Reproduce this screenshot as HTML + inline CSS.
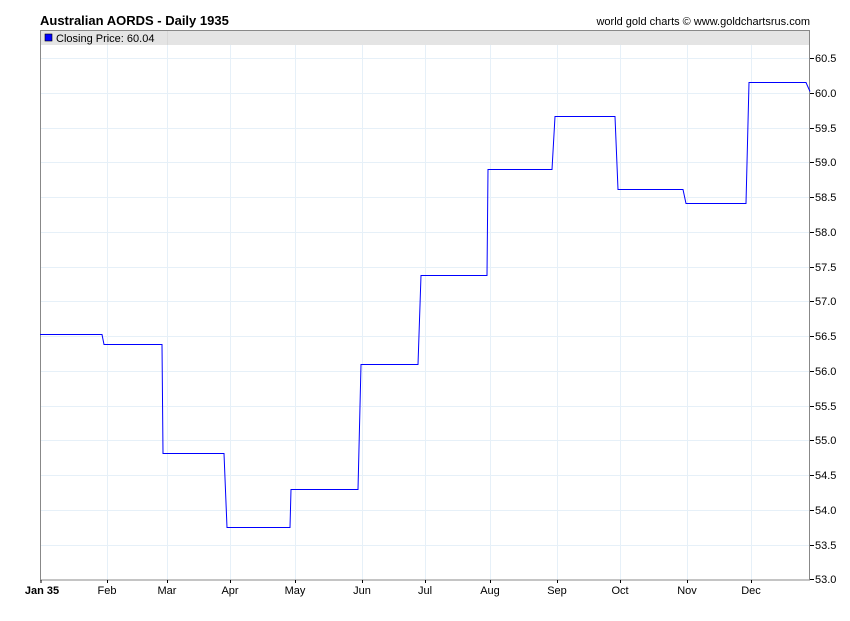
<!DOCTYPE html>
<html><head><style>
body{margin:0;background:#fff;width:850px;height:616px;overflow:hidden;font-family:"Liberation Sans",sans-serif}
</style></head><body>
<svg width="850" height="616" xmlns="http://www.w3.org/2000/svg" font-family="Liberation Sans, sans-serif">
<text x="40" y="25" font-size="13" font-weight="bold" fill="#000">Australian AORDS - Daily 1935</text>
<text x="810" y="25" font-size="11" text-anchor="end" fill="#000">world gold charts © www.goldchartsrus.com</text>
<rect x="40" y="30" width="770" height="15" fill="#e4e4e4"/>
<g stroke="#e6f0f8" stroke-width="1">
<line x1="40" y1="58.5" x2="810" y2="58.5"/><line x1="40" y1="93.5" x2="810" y2="93.5"/><line x1="40" y1="128.5" x2="810" y2="128.5"/><line x1="40" y1="162.5" x2="810" y2="162.5"/><line x1="40" y1="197.5" x2="810" y2="197.5"/><line x1="40" y1="232.5" x2="810" y2="232.5"/><line x1="40" y1="267.5" x2="810" y2="267.5"/><line x1="40" y1="301.5" x2="810" y2="301.5"/><line x1="40" y1="336.5" x2="810" y2="336.5"/><line x1="40" y1="371.5" x2="810" y2="371.5"/><line x1="40" y1="406.5" x2="810" y2="406.5"/><line x1="40" y1="440.5" x2="810" y2="440.5"/><line x1="40" y1="475.5" x2="810" y2="475.5"/><line x1="40" y1="510.5" x2="810" y2="510.5"/><line x1="40" y1="545.5" x2="810" y2="545.5"/>
<line x1="107.5" y1="45" x2="107.5" y2="580"/><line x1="167.5" y1="45" x2="167.5" y2="580"/><line x1="230.5" y1="45" x2="230.5" y2="580"/><line x1="295.5" y1="45" x2="295.5" y2="580"/><line x1="362.5" y1="45" x2="362.5" y2="580"/><line x1="425.5" y1="45" x2="425.5" y2="580"/><line x1="490.5" y1="45" x2="490.5" y2="580"/><line x1="557.5" y1="45" x2="557.5" y2="580"/><line x1="620.5" y1="45" x2="620.5" y2="580"/><line x1="687.5" y1="45" x2="687.5" y2="580"/><line x1="751.5" y1="45" x2="751.5" y2="580"/>
</g>
<line x1="107.5" y1="30" x2="107.5" y2="45" stroke="#d8d8d8"/><line x1="167.5" y1="30" x2="167.5" y2="45" stroke="#d8d8d8"/>
<rect x="40.5" y="30.5" width="769" height="549.5" fill="none" stroke="#888"/>
<rect x="45" y="34" width="7" height="7" fill="#0000ff" stroke="#000" stroke-width="0.6"/>
<text x="56" y="42" font-size="11" fill="#000">Closing Price: 60.04</text>
<polyline fill="none" stroke="#0000ff" stroke-width="1" points="40,334.5 102,334.5 104,344.5 162,344.5 163,453.5 224,453.5 227,527.5 290,527.5 291,489.5 358,489.5 361,364.5 418,364.5 421,275.5 487,275.5 488,169.5 552,169.5 555,116.5 615,116.5 618,189.5 683,189.5 686,203.5 746,203.5 749,82.5 806,82.5 810,91.5"/>
<g stroke="#000"><line x1="810" y1="58.5" x2="814" y2="58.5"/><line x1="810" y1="93.5" x2="814" y2="93.5"/><line x1="810" y1="128.5" x2="814" y2="128.5"/><line x1="810" y1="162.5" x2="814" y2="162.5"/><line x1="810" y1="197.5" x2="814" y2="197.5"/><line x1="810" y1="232.5" x2="814" y2="232.5"/><line x1="810" y1="267.5" x2="814" y2="267.5"/><line x1="810" y1="301.5" x2="814" y2="301.5"/><line x1="810" y1="336.5" x2="814" y2="336.5"/><line x1="810" y1="371.5" x2="814" y2="371.5"/><line x1="810" y1="406.5" x2="814" y2="406.5"/><line x1="810" y1="440.5" x2="814" y2="440.5"/><line x1="810" y1="475.5" x2="814" y2="475.5"/><line x1="810" y1="510.5" x2="814" y2="510.5"/><line x1="810" y1="545.5" x2="814" y2="545.5"/><line x1="810" y1="579.5" x2="814" y2="579.5"/>
<line x1="41" y1="580" x2="41" y2="583"/><line x1="107.5" y1="580" x2="107.5" y2="583"/><line x1="167.5" y1="580" x2="167.5" y2="583"/><line x1="230.5" y1="580" x2="230.5" y2="583"/><line x1="295.5" y1="580" x2="295.5" y2="583"/><line x1="362.5" y1="580" x2="362.5" y2="583"/><line x1="425.5" y1="580" x2="425.5" y2="583"/><line x1="490.5" y1="580" x2="490.5" y2="583"/><line x1="557.5" y1="580" x2="557.5" y2="583"/><line x1="620.5" y1="580" x2="620.5" y2="583"/><line x1="687.5" y1="580" x2="687.5" y2="583"/><line x1="751.5" y1="580" x2="751.5" y2="583"/></g>
<g font-size="11" fill="#000">
<text x="815" y="62">60.5</text><text x="815" y="97">60.0</text><text x="815" y="132">59.5</text><text x="815" y="166">59.0</text><text x="815" y="201">58.5</text><text x="815" y="236">58.0</text><text x="815" y="271">57.5</text><text x="815" y="305">57.0</text><text x="815" y="340">56.5</text><text x="815" y="375">56.0</text><text x="815" y="410">55.5</text><text x="815" y="444">55.0</text><text x="815" y="479">54.5</text><text x="815" y="514">54.0</text><text x="815" y="549">53.5</text><text x="815" y="583">53.0</text>
</g>
<g font-size="11" fill="#000" text-anchor="middle">
<text x="42" y="594" font-weight="bold">Jan 35</text><text x="107" y="594">Feb</text><text x="167" y="594">Mar</text><text x="230" y="594">Apr</text><text x="295" y="594">May</text><text x="362" y="594">Jun</text><text x="425" y="594">Jul</text><text x="490" y="594">Aug</text><text x="557" y="594">Sep</text><text x="620" y="594">Oct</text><text x="687" y="594">Nov</text><text x="751" y="594">Dec</text>
</g>
</svg>
</body></html>
